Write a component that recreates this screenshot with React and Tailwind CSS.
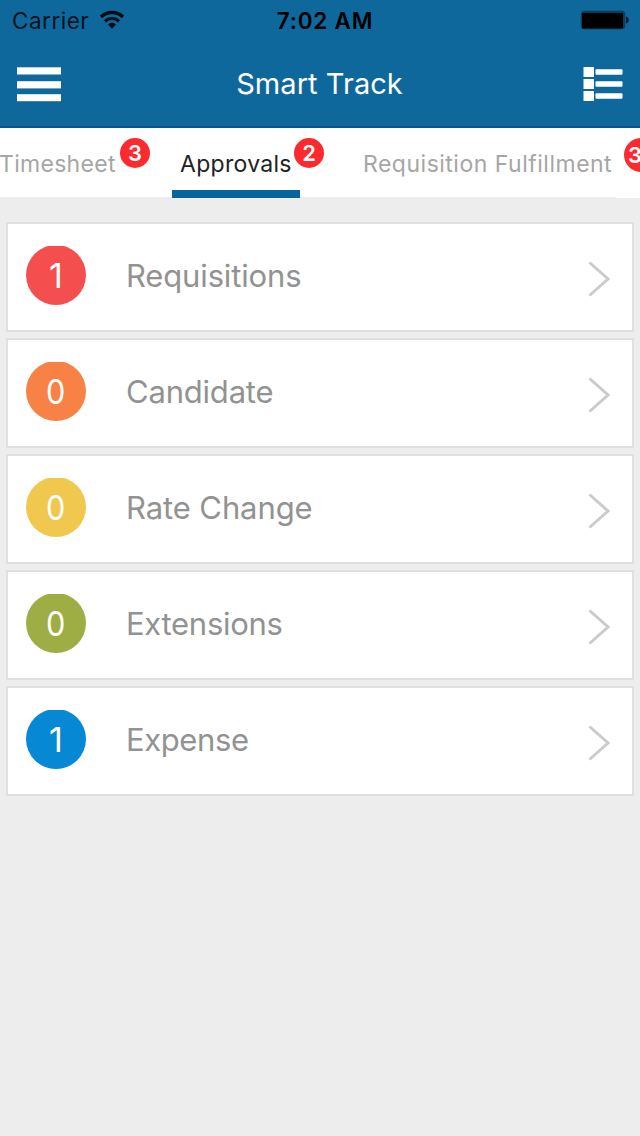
const approvals = [
  { label: 'Requisitions', count: 1, color: 'bg-[#f44e4e]', tracking: 'tracking-[-0.15px]' },
  { label: 'Candidate', count: 0, color: 'bg-[#f88145]', tracking: 'tracking-[-0.2px]' },
  { label: 'Rate Change', count: 0, color: 'bg-[#f1c84e]', tracking: 'tracking-[-0.1px]' },
  { label: 'Extensions', count: 0, color: 'bg-[#9fae44]', tracking: 'tracking-[-0.3px]' },
  { label: 'Expense', count: 1, color: 'bg-[#0688d4]', tracking: 'tracking-[-0.4px]' },
];

const WifiIcon = () => (
  <svg width="26" height="20" viewBox="0 0 26 20" fill="none" stroke="#020d14">
    <path d="M2 6.9C8 1.1 18 1.1 24 6.9" strokeWidth="3.5" />
    <path d="M5.9 11.4c4-3.9 10.2-3.9 14.2 0" strokeWidth="3.2" />
    <path d="M13 18.8l-4-4.2c2.3-2.4 5.7-2.4 8 0z" fill="#020d14" stroke="none" />
  </svg>
);

const BatteryIcon = () => (
  <svg width="50" height="20" viewBox="0 0 50 20">
    <rect x=".8" y=".8" width="44.4" height="18.4" rx="3.5" fill="#0a3d5c" />
    <rect x="2" y="3" width="41" height="15.5" rx="1" fill="#000" />
    <path d="M46 6.5c3.6.6 3.6 6.4 0 7z" fill="#03131d" />
  </svg>
);

const MenuIcon = () => (
  <svg width="44" height="36" viewBox="0 0 44 36" fill="#fff">
    <rect y="1.3" width="44" height="7.2" />
    <rect y="15.2" width="44" height="7.2" />
    <rect y="28.2" width="44" height="7" />
  </svg>
);

const ListIcon = () => (
  <svg width="40" height="36" viewBox="0 0 40 36" fill="#fff">
    {[0, 12, 24].map((y) => (
      <g key={y}>
        <rect x=".5" y={y + 1} width="10.5" height="10" rx=".5" />
        <rect x="12.5" y={y + 3.3} width="27" height="5.4" rx="1" />
      </g>
    ))}
  </svg>
);

const Badge = ({ children, className }) => (
  <span
    className={`absolute top-[10px] flex items-center justify-center rounded-full bg-[#fa2a2e] text-[22px] font-semibold tracking-normal text-white ${className}`}
  >
    {children}
  </span>
);

const ApprovalRow = ({ item }) => (
  <div className="flex h-[110px] items-center border-2 border-[#dfdfdf] bg-white pl-[18px] pr-[22px]">
    <div className="mb-[3px] h-[60px] w-[60px] overflow-hidden">
      <div
        className={`-mt-px flex h-[60px] w-[60px] items-center justify-center rounded-full pt-px text-[34px] text-white ${item.color}`}
      >
        <span className={item.count === 0 ? 'scale-x-90' : ''}>{item.count}</span>
      </div>
    </div>
    <span className={`mb-1 ml-10 flex-1 text-[31px] leading-none text-[#929292] ${item.tracking}`}>{item.label}</span>
    <svg width="22" height="36" viewBox="0 0 22 36" fill="none" stroke="#cbcbcb" strokeWidth="3" className="mt-1">
      <path d="M1.5 1.5L20 18 1.5 34.5" />
    </svg>
  </div>
);

const App = () => {
  return (
    <div className="min-h-[1136px] w-[640px] overflow-hidden bg-[#ededed] font-['Inter',sans-serif]">
      <header className="h-[128px] border-b-2 border-[#075393] bg-[#0f689c]">
        <div className="grid h-10 grid-cols-3 items-center pl-3 pr-[10px] text-[22.5px] text-[#03131d]">
          <div className="flex items-center gap-[10px]">
            <span className="pt-px tracking-[0.5px]">Carrier</span>
            <WifiIcon />
          </div>
          <div className="pl-[8px] pt-px text-center font-semibold tracking-[0.8px] text-black">7:02 AM</div>
          <div className="flex justify-end">
            <BatteryIcon />
          </div>
        </div>
        <div className="flex h-[88px] items-center justify-between pl-[17px] pr-[17px]">
          <MenuIcon />
          <h1 className="pr-[5px] text-[29px] tracking-[0.05px] text-white">Smart Track</h1>
          <ListIcon />
        </div>
      </header>

      <nav className="flex h-[69px] bg-white text-[23px] leading-[72px] text-[#a6a6a6]">
        <div className="relative w-[172px] whitespace-nowrap">
          <span className="-ml-px tracking-[0.3px]">Timesheet</span>
          <Badge className="left-[120px] h-[30px] w-[30px]">3</Badge>
        </div>
        <div className="relative h-[70px] w-[128px] whitespace-nowrap border-b-8 border-[#08659c] pl-2 text-[#222]">
          <span className="tracking-[0.3px]">Approvals</span>
          <Badge className="left-[122px] h-[30px] w-[30px]">2</Badge>
        </div>
        <div className="relative ml-[63px] w-[253px] whitespace-nowrap">
          <span className="tracking-[0.5px]">Requisition Fulfillment</span>
        </div>
        <div className="relative h-[70px] flex-1 bg-white">
          <Badge className="left-[8px] h-[34px] w-[34px] justify-start pl-[4px] text-[20px]">3</Badge>
        </div>
      </nav>

      <main className="flex flex-col gap-[6px] px-[6px] pt-[25px]">
        {approvals.map((item) => (
          <ApprovalRow key={item.label} item={item} />
        ))}
      </main>
    </div>
  );
};

export default App;
